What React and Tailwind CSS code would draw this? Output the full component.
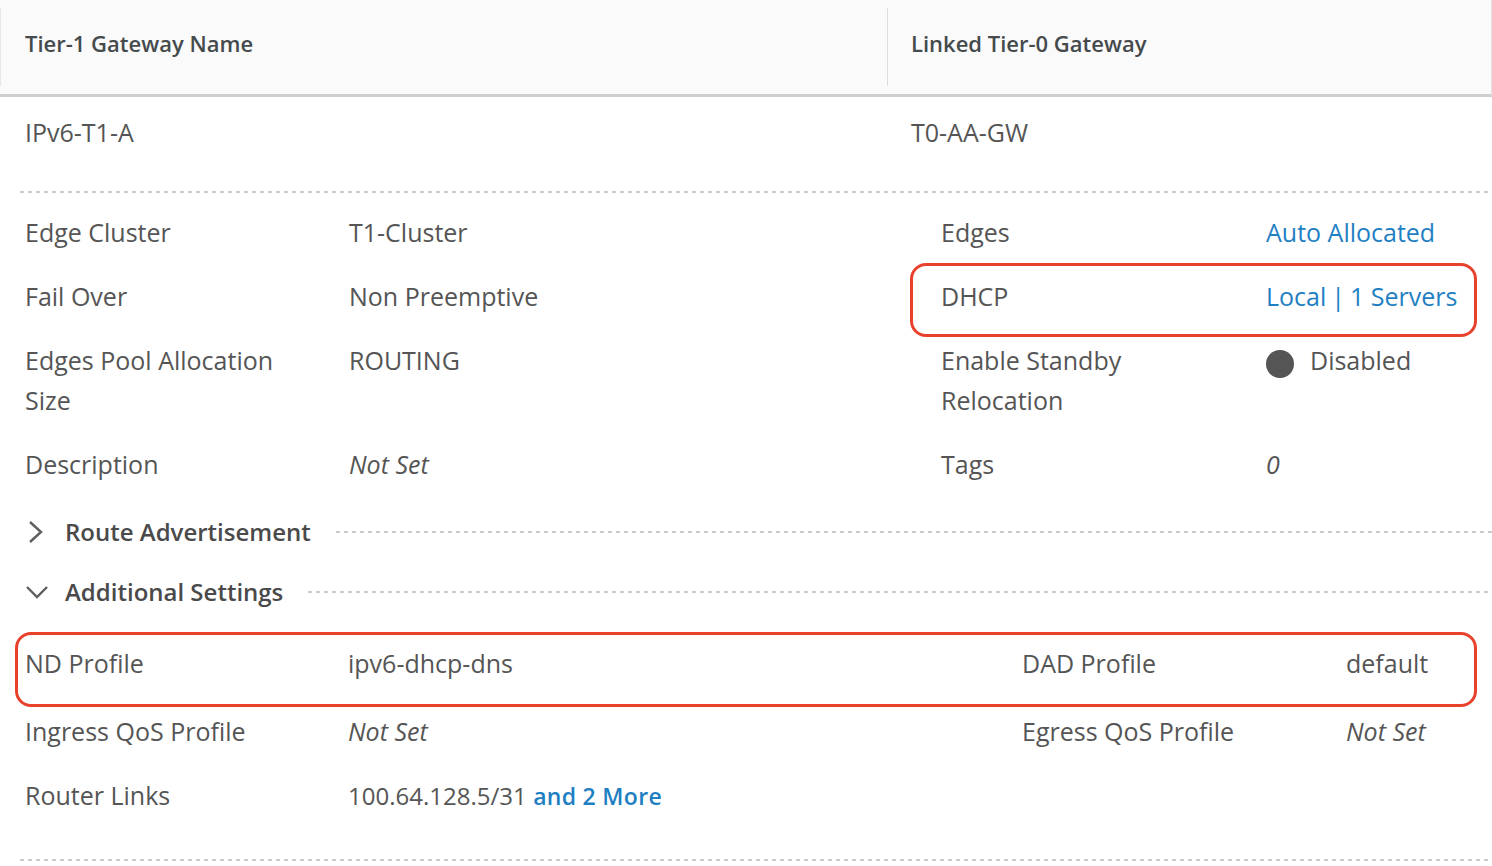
const dots =
  "h-[2px] bg-[linear-gradient(to_right,#cccccc_45%,transparent_45%)] bg-[length:8px_2px] bg-repeat-x";

function Link({ children }) {
  return <span className="text-[#1f7fc3]">{children}</span>;
}

function Muted({ children }) {
  return <span className="italic">{children}</span>;
}

function Chevron({ open }) {
  if (open) {
    return (
      <svg className="ml-[25px] h-[16px] w-[24px]" viewBox="0 0 24 16" fill="none">
        <polyline points="2,3 12,13 22,3" stroke="#5e5e5e" strokeWidth="2.4" />
      </svg>
    );
  }
  return (
    <svg className="ml-[28px] h-[24px] w-[16px]" viewBox="0 0 16 24" fill="none">
      <polyline points="2,2 13,12 2,22" stroke="#5e5e5e" strokeWidth="2.4" />
    </svg>
  );
}

function SectionToggle({ open, title }) {
  return (
    <div className="flex h-[40px] items-center">
      <div className="w-[65px]">
        <Chevron open={open} />
      </div>
      <span className="pr-[25px] text-[24px] font-semibold text-[#4a4a4a]">{title}</span>
      <div className={`flex-1 ${dots}`} />
    </div>
  );
}

export default function App() {
  return (
    <div className="relative h-[866px] w-[1492px] overflow-hidden bg-white font-['Open_Sans',sans-serif] text-[25px] leading-[40px] text-[#555555]">
      {/* table header */}
      <div className="flex h-[97px] border-b-[3px] border-r border-[#cfcfcf] border-r-[#e2e2e2] bg-[#fafafa]">
        <div className="my-[8px] w-px bg-[#e6e6e6]" />
        <div className="flex w-[886px] items-center pb-[8px] pl-[24px] text-[22px] font-semibold text-[#454a4d]">
          Tier-1 Gateway Name
        </div>
        <div className="my-[8px] w-px bg-[#dddddd]" />
        <div className="flex flex-1 items-center pb-[8px] pl-[23px] text-[22px] font-semibold text-[#454a4d]">
          Linked Tier-0 Gateway
        </div>
      </div>

      {/* row */}
      <div className="flex h-[94px] items-center pb-[24px]">
        <div className="w-[887px] pl-[25px]">IPv6-T1-A</div>
        <div className="pl-[24px]">T0-AA-GW</div>
      </div>
      <div className={`ml-[20px] ${dots}`} />

      {/* details */}
      <div className="grid grid-cols-[324px_592px_325px_1fr] gap-y-[24px] pl-[25px] pt-[19px]">
        <div>Edge Cluster</div>
        <div>T1-Cluster</div>
        <div>Edges</div>
        <div><Link>Auto Allocated</Link></div>

        <div>Fail Over</div>
        <div>Non Preemptive</div>
        <div>DHCP</div>
        <div>
          <Link>
            Local<span className="mx-[5px]">|</span>1 Servers
          </Link>
        </div>

        <div>Edges Pool Allocation<br />Size</div>
        <div>ROUTING</div>
        <div>Enable Standby<br />Relocation</div>
        <div className="flex items-start gap-[16px]">
          <span className="mt-[10px] h-[28px] w-[28px] rounded-full bg-[#555555]" />
          <span>Disabled</span>
        </div>

        <div>Description</div>
        <div><Muted>Not Set</Muted></div>
        <div>Tags</div>
        <div><Muted>0</Muted></div>
      </div>

      <div className="mt-[28px]">
        <SectionToggle title="Route Advertisement" />
      </div>
      <div className="mt-[20px]">
        <SectionToggle open title="Additional Settings" />
      </div>

      <div className="mt-[31px] grid grid-cols-[323px_674px_324px_1fr] gap-y-[28px] pl-[25px]">
        <div>ND Profile</div>
        <div>ipv6-dhcp-dns</div>
        <div>DAD Profile</div>
        <div>default</div>

        <div>Ingress QoS Profile</div>
        <div><Muted>Not Set</Muted></div>
        <div>Egress QoS Profile</div>
        <div><Muted>Not Set</Muted></div>
      </div>
      <div className="mt-[24px] flex pl-[25px]">
        <div className="w-[323px]">Router Links</div>
        <div>
          <span className="text-[24px]">100.64.128.5/31</span>{" "}
          <span className="text-[23px] font-semibold tracking-[0.3px]"><Link>and 2 More</Link></span>
        </div>
      </div>
      <div className={`ml-[20px] mt-[43px] ${dots}`} />

      {/* annotation highlights */}
      <div className="absolute left-[910px] top-[263px] h-[74px] w-[567px] rounded-[16px] border-[3px] border-[#e8412c]" />
      <div className="absolute left-[15px] top-[632px] h-[75px] w-[1462px] rounded-[16px] border-[3px] border-[#e8412c]" />
    </div>
  );
}
